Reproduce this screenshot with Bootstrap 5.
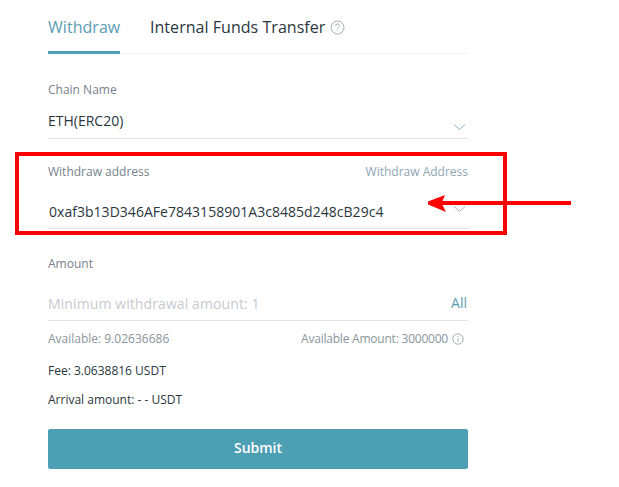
<!DOCTYPE html>
<html lang="en">
<head>
  <meta charset="UTF-8" />
  <title>Withdraw</title>
  <link href="https://cdn.jsdelivr.net/npm/bootstrap@5.3.0/dist/css/bootstrap.min.css" rel="stylesheet" />
  <style>
    body { font-family: "Open Sans", "Liberation Sans", sans-serif; background: #fff; color: #2b3640; overflow: hidden; }
    .wd-page { position: relative; width: 619px; height: 487px; }
    .wd-panel { width: 420px; margin-left: 48px; }
    .wd-tabs { height: 54px; border-bottom: 1px solid #f0f1f2; }
    .wd-tab { font-size: 16px; line-height: 22px; padding-top: 16px; height: 54px; letter-spacing: .04px; }
    .wd-tab-active { color: #5b9db5; width: 72px; border-bottom: 3px solid #4d9fb4; margin-right: 30px; }
    .wd-help { margin-left: 5px; }
    .wd-label { font-size: 12px; line-height: 16px; color: #77828c; }
    .wd-hint { color: #8fa6b5; }
    .wd-value { font-size: 14px; line-height: 20px; color: #2b3640; }
    .wd-line { border-bottom: 1px solid #e1e3e5; }
    .wd-chain { padding-top: 28px; height: 85px; }
    .wd-chain .wd-value { margin-top: 13px; height: 28px; }
    .wd-addr { padding-top: 25px; height: 90px; }
    .wd-addr .wd-value { margin-top: 22px; padding-left: 1px; letter-spacing: .03px; }
    .wd-amount { padding-top: 27px; }
    .wd-amount .wd-value { margin-top: 22px; height: 27px; }
    .wd-placeholder { color: #c6cad0; letter-spacing: .1px; }
    .wd-all { color: #5b9db5; margin: -1px 1px 0 0; }
    .wd-small { font-size: 12px; line-height: 16px; }
    .wd-muted { color: #8a949c; }
    .wd-limit { letter-spacing: -.22px; }
    .wd-avail { margin-top: 10px; }
    .wd-fee { margin-top: 16px; }
    .wd-arrival { margin-top: 13px; }
    .wd-submit { background: #4d9fb4; border-color: #4d9fb4; color: #fff; font-size: 14px; font-weight: 600; line-height: 18px; padding: 9px 12px 11px; height: 40px; width: 100%; border-radius: 2px; margin-top: 21px; }
    .wd-redbox { position: absolute; left: 15px; top: 152px; width: 492px; height: 83px; border: 4px solid #f00; }
    .wd-arrow { position: absolute; left: 426px; top: 193px; }
    .wd-chevron { position: absolute; right: 2px; }
    .wd-chain .wd-chevron { bottom: 7px; }
    .wd-addr .wd-chevron { bottom: 15px; }
  </style>
</head>
<body>
  <div class="wd-page">
    <div class="wd-panel">
      <div class="wd-tabs d-flex">
        <div class="wd-tab wd-tab-active">Withdraw</div>
        <div class="wd-tab d-flex align-items-start">Internal Funds Transfer
          <svg class="mt-1 wd-help" width="15" height="15" viewBox="0 0 15 15" fill="none" stroke="#a9b0b6"><circle cx="7.5" cy="7.5" r="6.5"/><path d="M5.6 6a1.9 1.9 0 1 1 2.8 1.6c-.6.4-.9.7-.9 1.4"/><path d="M7.5 10.2v1.1"/></svg>
        </div>
      </div>

      <div class="wd-chain wd-line position-relative">
        <div class="wd-label">Chain Name</div>
        <div class="wd-value">ETH(ERC20)</div>
        <svg class="wd-chevron" width="13" height="8" viewBox="0 0 13 8" fill="none" stroke="#8fb3c4"><path d="M1 1.5l5.5 5 5.5-5"/></svg>
      </div>

      <div class="wd-addr wd-line position-relative">
        <div class="wd-label d-flex justify-content-between"><span>Withdraw address</span><span class="wd-hint">Withdraw Address</span></div>
        <div class="wd-value">0xaf3b13D346AFe7843158901A3c8485d248cB29c4</div>
        <svg class="wd-chevron" width="13" height="8" viewBox="0 0 13 8" fill="none" stroke="#a5adb3"><path d="M1 1.5l5.5 5 5.5-5"/></svg>
      </div>

      <div class="wd-amount">
        <div class="wd-label">Amount</div>
        <div class="wd-value wd-line d-flex justify-content-between"><span class="wd-placeholder">Minimum withdrawal amount: 1</span><span class="wd-all">All</span></div>
        <div class="wd-small wd-avail d-flex justify-content-between">
          <span class="wd-muted">Available: 9.02636686</span>
          <span class="wd-muted wd-limit d-flex align-items-center me-1">Available Amount: 3000000
            <svg class="ms-1" width="12" height="12" viewBox="0 0 12 12" fill="none" stroke="#a9b0b6"><circle cx="6" cy="6" r="5.2"/><path d="M6 5.2v3.6M6 3v1.1"/></svg>
          </span>
        </div>
        <div class="wd-small wd-fee">Fee: 3.0638816 USDT</div>
        <div class="wd-small wd-arrival">Arrival amount: - - USDT</div>
      </div>

      <button type="button" class="btn wd-submit">Submit</button>
    </div>

    <div class="wd-redbox"></div>
    <svg class="wd-arrow" width="146" height="20" viewBox="0 0 146 20"><path d="M145 8H16.5L19 2 2 8.5v3L20 19l-3.5-7H145z" fill="#f00"/></svg>
  </div>
  <script src="https://cdn.jsdelivr.net/npm/bootstrap@5.3.0/dist/js/bootstrap.bundle.min.js"></script>
</body>
</html>
